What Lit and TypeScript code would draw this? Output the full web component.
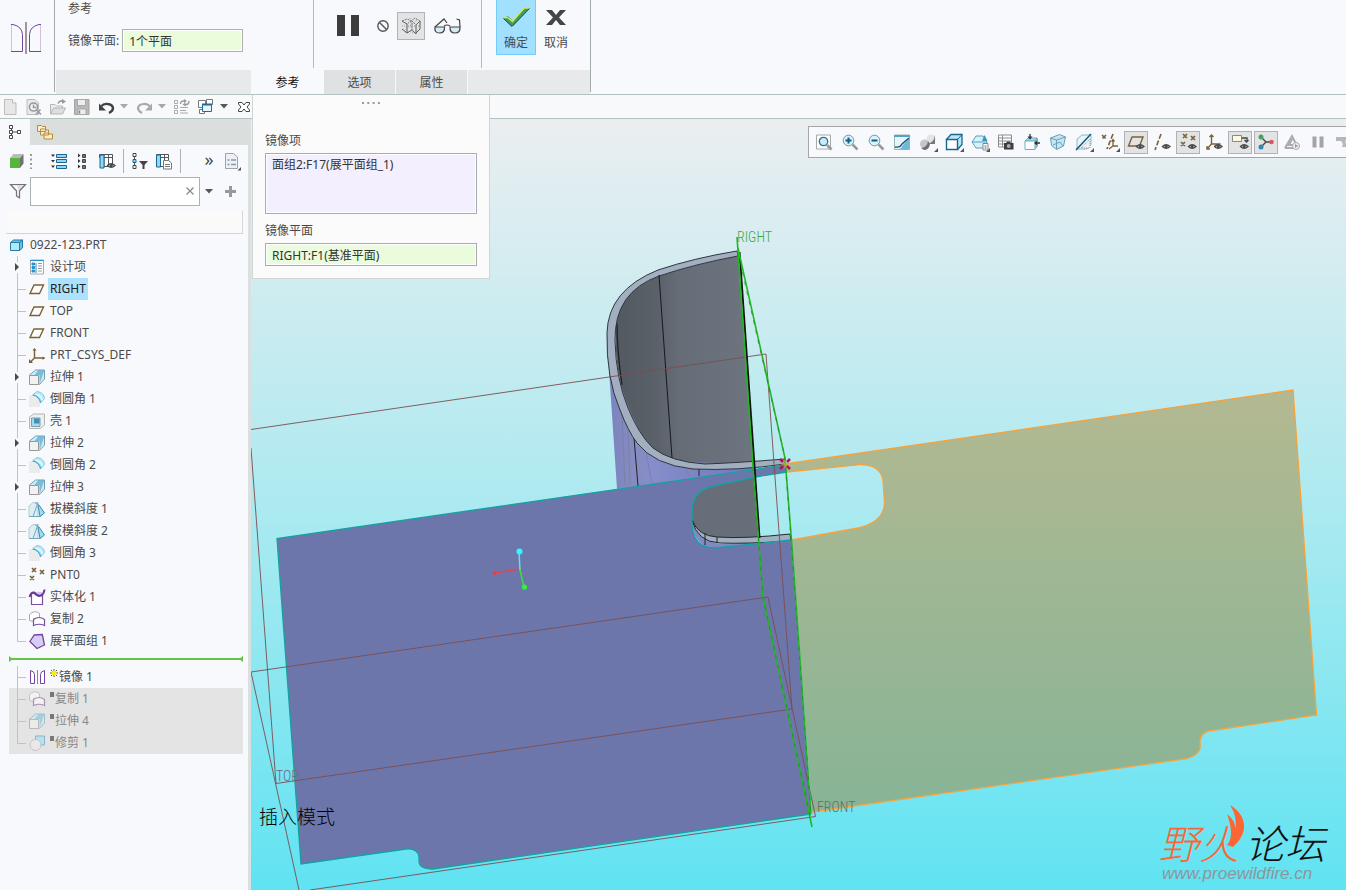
import { LitElement, html, svg, css, nothing, TemplateResult, SVGTemplateResult } from "lit";
import { customElement, state } from "lit/decorators.js";
import { classMap } from "lit/directives/class-map.js";

const eye = svg`<path d="M8.500 12.500q3.500-3.600 7.500 0q-4 3.600-7.500 0z" fill="#eef0f1" stroke="#484848" stroke-width="1.300"/><circle cx="12.200" cy="12.500" r="1.500" fill="#484848"/>`;
const corner = svg`<path d="M18 14v4h-4z" fill="#555"/>`;

const ICONS: Record<string, SVGTemplateResult> = {
  newDoc: svg`<path d="M2.500 .5h8l3.500 3.500v11.500h-11.500z" fill="#e7e7e7" stroke="#bdbdbd"/><path d="M10.500 .5v3.500h3.500" fill="#fff" stroke="#bdbdbd"/>`,
  findDoc: svg`<path d="M1 .5h8l3.500 3.500v11.500h-11.500z" fill="#e9e9e9" stroke="#bdbdbd"/><circle cx="7.500" cy="8" r="4" fill="#f4f4f4" stroke="#999" stroke-width="1.600"/><path d="M10.500 11l4.500 4.500M14.500 10.500l-4.500 5M7.500 5.500v3h2.500" fill="none" stroke="#999" stroke-width="1.500"/>`,
  open: svg`<path d="M.5 15v-9.500h4.500l1.500 1.500h6v3" fill="#eee" stroke="#b5b5b5"/><path d="M.5 15l3-6h12l-3 6z" fill="#dedede" stroke="#b5b5b5"/><path d="M8 4.500q1.500-3 4.500-2.500" fill="none" stroke="#999" stroke-width="1.600"/><path d="M12 0l4 2.500-4 2.500z" fill="#999"/>`,
  save: svg`<path d="M.5 .5h14.500v15h-14.500z" fill="#b8b8b8" stroke="#a4a4a4"/><path d="M3.500 .5h8v6h-8zM4 10h8v5.500h-8z" fill="#eee" stroke="#a9a9a9"/><path d="M5.500 11.500v3" stroke="#888" stroke-width="1.500"/>`,
  undo: svg`<path d="M3.500 7q2-2.500 6-2q5 .5 5.500 4q0 3-4 5" fill="none" stroke="#3e4346" stroke-width="2.400"/><path d="M1 4.500v7h7z" fill="#3e4346"/>`,
  redo: svg`<path d="M13.500 7q-2-2.500-6-2q-5 .5-5.500 4q0 3 4 5" fill="none" stroke="#a7a9aa" stroke-width="2.200"/><path d="M16 4.500v7h-7z" fill="#a7a9aa"/>`,
  regen: svg`<path d="M.5 1.500h3v3h-3zM.5 6.500h3v3h-3zM.5 11.500h3v3h-3z" fill="#fff" stroke="#aaa"/><path d="M6 8.500h8M6 11.500h6M6 14h8" stroke="#aaa"/><path d="M6.500 5q0-3.500 4-3M15 2q0 4-4 3.500" fill="none" stroke="#999" stroke-width="1.400"/><path d="M10 0l3 2-3 2zM11.500 3.500l-3 2 3 2z" fill="#999"/>`,
  windows: svg`<path d="M.5 1.500h7v7h-7zM8.500 .5h6v5h-6zM1.500 10.500h5v4h-5z" fill="#fff" stroke="#777"/><path d="M4.500 5.500h9v7h-9z" fill="#e6f6fd" stroke="#1f6d94"/><path d="M4 5.500h10" stroke="#1f6d94" stroke-width="2"/>`,
  closeOut: svg`<path d="M2.500 3.500h3.500l2 2.500 2-2.500h3.500v1.500l-2.500 3 2.500 3v1.500h-3.500l-2-2.500-2 2.500h-3.500v-1.500l2.500-3-2.500-3z" fill="#fff" stroke="#444"/>`,
  modelTree: svg`<path d="M4.500 3v10M6 8h5" stroke="#555" fill="none"/><path d="M2.500 1.500h3v3h-3zM2.500 6.500h3v3h-3zM2.500 11.500h3v3h-3zM10.500 6.500h3v3h-3z" fill="#fff" stroke="#444"/>`,
  layers: svg`<path d="M.5 1.500h4l1 1h3v5h-8zM3.500 5h4l1 1h3v5h-8zM7 9h4l1 1h3.500v5h-8.500z" fill="#fdeccb" stroke="#b98b3d"/>`,
  greenCube: svg`<path d="M1 5h10v10h-10z" fill="#58b53c"/><path d="M1 5l3.500-4h10l-3.500 4z" fill="#b9bbb9"/><path d="M11 5l3.500-4v9.500l-3.500 4.500z" fill="#6f7370"/>`,
  expand: svg`<path d="M0 1.500h4l-2 2.500zM0 7h4l-2 2.500zM0 12.500h4l-2 2.500z" fill="#333"/><path d="M5.500 1.500h10v3h-10zM5.500 6.500h10v3h-10zM5.500 12.500h10v3h-10z" fill="#8fd8f8" stroke="#1b668c"/>`,
  collapse: svg`<path d="M3 .5v4l2.500-2zM3 6v4l2.500-2zM3 11.500v4l2.500-2z" fill="#333"/><path d="M7.500 1.500h3v3h-3zM7.500 6.500h3v3h-3zM7.500 12.500h3v3h-3z" fill="#777" stroke="#444"/>`,
  columns: svg`<path d="M.5 1.500h13v3h-13zM5 4.500h4.500v9h-4.500zM9.500 4.500h4v9h-4zM5 1.500v3M9.500 1.500v3" fill="#fff" stroke="#555"/><path d="M1 2h4v13h-4z" fill="#8fd8f8" stroke="#1b668c"/>${eye}`,
  treeFilter: svg`<path d="M2.500 3v10" stroke="#555"/><path d="M1 .5h3v3h-3zM1 12.500h3v3h-3z" fill="#fff" stroke="#444"/><path d="M1 6.500h3v3h-3z" fill="#8fd8f8" stroke="#1b668c"/><path d="M7 8h9l-3.500 4v4h-2v-4z" fill="#444"/>`,
  columnDoc: svg`<path d="M.5 1.500h12v3h-12zM4.500 1.500v12h8v-9M8.500 1.500v12" fill="#fff" stroke="#555"/><path d="M.5 2h4v12h-4z" fill="#8fd8f8" stroke="#1b668c"/><path d="M7.500 7.500h5l3 2.500v6h-8z" fill="#fff" stroke="#777"/><path d="M9 11.500h5M9 13.500h5" stroke="#777"/>`,
  docList: svg`<path d="M.5 .5h8l4 3.500v11.500h-12z" fill="#edf1f5" stroke="#9da3a8"/><path d="M2.500 7h2M2.500 11.500h2M6 7h5M6 11.500h5" stroke="#8c97a3" stroke-width="1.600"/><path d="M16 14v3.500h-3.500z" fill="#555"/>`,
  funnel: svg`<path d="M.5 1.500h15l-6 6.500v7l-3-2v-5z" fill="#dedfe0" stroke="#707476" stroke-width="1.200"/><path d="M3 2.500h4l1.500 5v5h-1v-5z" fill="#fff"/>`,
  part: svg`<path d="M1.500 5.500h9v8h-9z" fill="#aeeafe" stroke="#2a7aa3"/><path d="M1.500 5.500l3-2.500h9l-3 2.500zM10.500 5.500l3-2.500v8l-3 2.500z" fill="#5fc4ee" stroke="#2a7aa3" stroke-linejoin="round"/>`,
  design: svg`<path d="M1.500 1h13v14h-13z" fill="#fff" stroke="#aaa"/><path d="M1 1.500h14M7 4v10" stroke="#2d8fc9" fill="none"/><path d="M3 4h2.500v2h-2.500zM3 7.500h2.500v2h-2.500zM3 11h2.500v2h-2.500z" fill="#2d8fc9" stroke="#2d8fc9"/><path d="M9 4.500h4M9 7h4M9 9.500h4M9 12h4" stroke="#999"/>`,
  plane: svg`<path d="M5 4h9.500l-4 8.500h-9.500z" fill="#fff" stroke="#7d6134" stroke-width="1.400"/>`,
  csys: svg`<path d="M5.500 2v9h10M5.500 11l-4 4" fill="none" stroke="#7d6134" stroke-width="1.400"/><path d="M3.500 3.500l2-2.500 2 2.500zM13.500 9.500l2.500 1.500-2.500 2zM0 12v4h4z" fill="#7d6134"/>`,
  extrude: svg`<path d="M.5 6l6-5h9v9l-5 5.500z" fill="#c8edfb" stroke="#789fb0"/><path d="M5.500 6l4-5h6l-5 5zM10.500 15v-9l5-5z" fill="#68afd0" opacity=".8"/><path d="M.5 6.500h9v9h-9z" fill="#f1f1f1" stroke="#999"/>`,
  round: svg`<path d="M0 4h5q6 1 6 7v5h-11z" fill="#ebebeb"/><path d="M4 3.500l4-3q7 1 7.500 7l-3.500 4q-1-6-8-8z" fill="#b8edff" stroke="#8cc4d8"/><path d="M3.500 4q7 1.500 8 8" fill="none" stroke="#3f9fc4"/><path d="M6.500 3q5.500 1 7 6" fill="none" stroke="#fff"/>`,
  shell: svg`<path d="M.5 4l4-3h11v11l-4 3.500h-11z" fill="#efefef" stroke="#b4b4b4"/><path d="M2.500 5h8.500v8.500h-8.500z" fill="#a9d9e8" stroke="#789fb0"/><path d="M5 5.500h5.500v5h-5.500z" fill="#3f91bb"/>`,
  draft: svg`<path d="M0 5l4-3.500h5v14h-9z" fill="#dceef4" stroke="#b7cbd2"/><path d="M10 4l5.500 8-4.500 3.500-2-11z" fill="#9bdbf3" stroke="#3d8bad"/><path d="M9 1.500l-5 14M0 15.500h11M6 2l4 2" fill="none" stroke="#6fa9c0"/>`,
  points: svg`<path d="M3 1l4 4m0-4l-4 4M11 3l4 4m0-4l-4 4M1 9l4 4m0-4l-4 4" stroke="#7d6134" stroke-width="1.700"/>`,
  solidify: svg`<path d="M2.500 5v10.500h11v-10q-3 1-4 0q-4-3-7-.5z" fill="#fff" stroke="#7a4ea0" stroke-width="1.200"/><path d="M6 3q6-1 8 1l-3 3q-3 0-5-4z" fill="#d3c4ea"/><path d="M.5 8q1.500-5 4.500-4.500q4 4.500 7 3q3-1.500 3.500-6" fill="none" stroke="#6a3a99" stroke-width="2"/>`,
  copy: svg`<path d="M.5 9.500v-6q5-5 10-1v5h-6v3z" fill="#fff" stroke="#aaa"/><path d="M4.500 14.500v-6q5.500-4 11 0v6q-5.500-2.500-11 0z" fill="#fff" stroke="#7a4ea0" stroke-width="1.200"/>`,
  flatten: svg`<path d="M.8 8.500l4.500-6.500 8-.5 2.200 10.500-7.500 3.500z" fill="#d7ccf3" stroke="#7445a0" stroke-width="1.300"/>`,
  mirror: svg`<path d="M8.500 1v14" stroke="#888"/><path d="M1.500 1.500v13h4v-9q0-3-4-4zM15.500 1.500v13h-4v-9q0-3 4-4z" fill="#fff" stroke="#7445a0"/>`,
  trim: svg`<path d="M6.500 1h9v9h-9z" fill="#9ddcf3" stroke="#3b91b5"/><circle cx="6.500" cy="10" r="5.500" fill="#eee" stroke="#aaa"/>`,
  fit: svg`<path d="M.5 1h14v14h-14z" fill="#fff" stroke="#a9a9a9"/><circle cx="7.500" cy="7.500" r="4.200" fill="#c8ecfa" stroke="#37708c" stroke-width="1.300"/><path d="M11 11l4.500 4.500" stroke="#999" stroke-width="2.600"/>`,
  zoomIn: svg`<circle cx="6.500" cy="6.500" r="5.300" fill="#d9f2fd" stroke="#6a97aa"/><path d="M6.500 3.500v6M3.500 6.500h6" stroke="#125d86" stroke-width="2"/><path d="M10.500 10.500l5 5" stroke="#999" stroke-width="2.500"/>`,
  zoomOut: svg`<circle cx="6.500" cy="6.500" r="5.300" fill="#d9f2fd" stroke="#6a97aa"/><path d="M3.500 6.500h6" stroke="#125d86" stroke-width="2"/><path d="M10.500 10.500l5 5" stroke="#999" stroke-width="2.500"/>`,
  repaint: svg`<path d="M.5 1h15v14.500h-15z" fill="#e6f5fa" stroke="#9fb5be"/><path d="M15.500 4v11.500h-11q3-1 4-4z" fill="#6fb9d6"/><path d="M0 2h16" stroke="#55a3c2" stroke-width="2"/><path d="M1 13q5 1 7-3l7-6" fill="none" stroke="#174f6c" stroke-width="1.300"/>`,
  shade: svg`<circle cx="11" cy="5" r="4.500" fill="#e4e4e4"/><path d="M15 1v9h-8q7-1 8-9z" fill="#777"/><circle cx="4.500" cy="10" r="4.500" fill="#c6c6c6"/><path d="M1 14q6 0 7-7l2 3q-1 6-6 6z" fill="#6f6f6f"/>${corner}`,
  displayCube: svg`<path d="M.5 5.500l4.500-5h11v10l-4.500 5z" fill="#bfe7f6" stroke="#1b668c" stroke-width="1.300"/><path d="M.5 5.500h11v10h-11z" fill="#fff" stroke="#1b668c" stroke-width="1.400"/><path d="M11.500 5.500l4.500-5" stroke="#1b668c"/>${corner}`,
  orient: svg`<path d="M4 2h7l4 6-4 6h-7l-4-6z" fill="#d4f1fb" stroke="#5b9fb9"/><path d="M0 8h15" stroke="#5b9fb9"/><path d="M10 7l2.500-6 3 6z" fill="#3e93b6"/><path d="M11 9.500h5v6.500h-5z" fill="#fff" stroke="#888"/><path d="M12.500 12h2M12.500 14h2" stroke="#666"/>${corner}`,
  viewMgr: svg`<path d="M.5 1h13v12h-13zM.5 4h13M.5 7h13M.5 10h13M4.500 1v12" fill="#fff" stroke="#8b8b8b"/><path d="M6 9h2l1-1.500h3l1 1.500h2.500v6.500h-9.500z" fill="#3e3e3e"/><circle cx="10.700" cy="12" r="2" fill="#aaa"/>`,
  direction: svg`<path d="M1 7l3-3h9l-2 3zM11 7l2.500-3v8l-2.500 3z" fill="#9edcf1" stroke="#71aec5"/><path d="M1 7h10v8.500h-10z" fill="#fff" stroke="#71aec5"/><path d="M6 0v5M16 9h-5" stroke="#333" stroke-width="1.300"/><path d="M3.500 2.500h5l-2.500 3zM13 6.500v5l-3-2.500z" fill="#333"/>`,
  perspective: svg`<path d="M.5 4l9-3.500 6 2.500-2 9-7 3.500-5-4z" fill="#c5e6f1" stroke="#6b9fb4"/><path d="M.5 4l6 2v9M6.500 6l9-3M3 11l7-3 3 4" fill="none" stroke="#6b9fb4"/>`,
  section: svg`<path d="M1 5l5-4h9v10l-4 4h-10z" fill="#e7f4f8" stroke="#89b9ca"/><path d="M14 5v9h-9z" fill="#eee" stroke="#999" stroke-dasharray="1 1"/><path d="M0 16l15-16" stroke="#145678" stroke-width="1.400"/>${corner}`,
  datums: svg`<path d="M0 1l4 4m0-4l-4 4M11 0l-6 15" stroke="#7d6134" stroke-width="1.600" stroke-dasharray="5 2"/><path d="M11 6v6h5M11 12l-4 3M9.500 7.500l1.500-2 1.500 2" fill="none" stroke="#7d6134" stroke-width="1.300"/>${corner}`,
  planeEye: svg`<path d="M4 3h11l-3.500 9h-11z" fill="none" stroke="#7d6134" stroke-width="1.400"/>${eye}`,
  axisEye: svg`<path d="M7 0l-6 16" stroke="#7d6134" stroke-width="1.600" stroke-dasharray="5 2"/>${eye}`,
  pointEye: svg`<path d="M3 0l4 4m0-4l-4 4M11 2l4 4m0-4l-4 4M1 8l4 4m0-4l-4 4" stroke="#7d6134" stroke-width="1.700"/>${eye}`,
  csysEye: svg`<path d="M5.500 1v9h9M5.500 10l-4.500 5M3.500 3l2-2 2 2M1 12v3h3" fill="none" stroke="#7d6134" stroke-width="1.400"/>${eye}`,
  noteEye: svg`<path d="M.5 1.500h9v6h-9z" fill="#fff8dd" stroke="#888"/><path d="M10 4h5v4M12.500 6l2 2 2-2" fill="none" stroke="#444" stroke-width="1.300"/>${eye}`,
  spin: svg`<path d="M3 3l5 5-5 5M8 8h6" fill="none" stroke="#444" stroke-width="1.400"/><circle cx="3" cy="3" r="2.500" fill="#4da05a"/><circle cx="3" cy="13" r="2.500" fill="#3286b5"/><circle cx="13.500" cy="8" r="2.300" fill="#d95757"/>`,
  simulate: svg`<path d="M1 14l7-12 6 12M1 14h9M8 5l-3 6h5" fill="none" stroke="#a9abac" stroke-width="2"/><circle cx="12" cy="12" r="3.500" fill="#eee" stroke="#aaa"/><path d="M11 10v4l3-2z" fill="#999"/>`,
  pauseSmall: svg`<path d="M2.500 2.500h4v11h-4zM9.500 2.500h4v11h-4z" fill="#a2a4a5"/>`,
  stepBack: svg`<path d="M0 3h12q-5 5 0 10h-6q2-3-1-6h-5z" fill="#b5b7b8"/>`,
};

const icon = (name: string, size = 16): TemplateResult =>
  html`<svg class="icon" width=${size} height=${size} viewBox="0 0 16 16" aria-hidden="true">${ICONS[name]}</svg>`;

interface Feature {
  label: string;
  icon: string;
  expandable?: boolean;
  selected?: boolean;
}

const FEATURES: Feature[] = [
  { label: "设计项", icon: "design", expandable: true },
  { label: "RIGHT", icon: "plane", selected: true },
  { label: "TOP", icon: "plane" },
  { label: "FRONT", icon: "plane" },
  { label: "PRT_CSYS_DEF", icon: "csys" },
  { label: "拉伸 1", icon: "extrude", expandable: true },
  { label: "倒圆角 1", icon: "round" },
  { label: "壳 1", icon: "shell" },
  { label: "拉伸 2", icon: "extrude", expandable: true },
  { label: "倒圆角 2", icon: "round" },
  { label: "拉伸 3", icon: "extrude", expandable: true },
  { label: "拔模斜度 1", icon: "draft" },
  { label: "拔模斜度 2", icon: "draft" },
  { label: "倒圆角 3", icon: "round" },
  { label: "PNT0", icon: "points" },
  { label: "实体化 1", icon: "solidify" },
  { label: "复制 2", icon: "copy" },
  { label: "展平面组 1", icon: "flatten" },
];

const SUPPRESSED: Feature[] = [
  { label: "复制 1", icon: "copy" },
  { label: "拉伸 4", icon: "extrude" },
  { label: "修剪 1", icon: "trim" },
];

const VIEW_TOOLS: Array<{ icon: string; title: string; on?: boolean }> = [
  { icon: "fit", title: "重新调整" },
  { icon: "zoomIn", title: "放大" },
  { icon: "zoomOut", title: "缩小" },
  { icon: "repaint", title: "重画" },
  { icon: "shade", title: "渲染选项" },
  { icon: "displayCube", title: "显示样式" },
  { icon: "orient", title: "已保存方向" },
  { icon: "viewMgr", title: "视图管理器" },
  { icon: "direction", title: "视图法向" },
  { icon: "perspective", title: "透视图" },
  { icon: "section", title: "截面" },
  { icon: "datums", title: "基准显示过滤器" },
  { icon: "planeEye", title: "平面显示", on: true },
  { icon: "axisEye", title: "轴显示" },
  { icon: "pointEye", title: "点显示", on: true },
  { icon: "csysEye", title: "坐标系显示" },
  { icon: "noteEye", title: "注释显示", on: true },
  { icon: "spin", title: "旋转中心", on: true },
  { icon: "simulate", title: "仿真" },
  { icon: "pauseSmall", title: "暂停" },
  { icon: "stepBack", title: "返回" },
];

const reset = css`
  * { box-sizing: border-box; }
  button { font: inherit; color: inherit; background: none; border: 0; padding: 0; margin: 0; display: inline-flex; align-items: center; justify-content: center; }
  input, textarea { font: inherit; color: inherit; margin: 0; border-radius: 0; outline: none; }
  svg { display: block; flex: none; overflow: visible; }
`;

@customElement("feature-dashboard")
export class FeatureDashboard extends LitElement {
  @state() private tab = "参考";

  static styles = [reset, css`
    :host { display: flex; height: 95px; background: #f7f9fc; border-bottom: 1px solid #b4c1c1; }
    .kind { width: 55px; padding: 22px 0 0 11px; border-right: 1px solid #a3adad; margin-bottom: 2px; }
    .board { width: 536px; display: flex; flex-direction: column; border-right: 1px solid #a3adad; margin-bottom: 2px; }
    .top { display: flex; height: 68px; flex: none; }
    .fields { width: 259px; padding-left: 13px; border-right: 1px solid #b2baba; }
    .title { height: 18px; line-height: 18px; }
    .field { display: flex; align-items: center; gap: 3px; margin-top: 11px; }
    .field input { width: 121px; height: 23px; padding: 0 6px; border: 1px solid #adb0ad; background: #eafcdc; box-shadow: inset 0 0 0 1px #fff; color: #333; }
    .controls { width: 168px; display: flex; align-items: flex-start; padding: 12px 0 0 22px; border-right: 1px solid #b2baba; }
    .controls button { height: 28px; }
    .pause { width: 24px; }
    .none { width: 16px; margin: 0 6px 0 15px; }
    .preview { width: 28px; border: 1px solid #b0b2b3; background: #e1e3e4; }
    .glasses { width: 28px; margin-left: 8px; }
    .finish { display: flex; padding-left: 14px; }
    .finish button { width: 40px; height: 55px; flex-direction: column; justify-content: flex-start; border: 1px solid transparent; border-top: 0; padding-top: 7px; gap: 7px; line-height: 18px; }
    .finish .ok { background: #a2e0ff; border-color: #72cdfa; }
    .tabs { display: flex; height: 24px; margin-top: 2px; padding-left: 1px; gap: 1px; flex: none; }
    .blank { background: #e8e9eb; width: 195px; }
    .rest { background: #e8e9eb; flex: 1; }
    .tabs button { width: 71px; background: #e0e1e3; padding-top: 2px; }
    .tabs .active { background: #f7f9fc; color: #111; }
  `];

  render() {
    return html`
      <div class="kind">
        <svg width="30" height="32" viewBox="0 0 30 32" aria-hidden="true">
          <path d="M.5 2v28M29.500 2v28" stroke="#cfc0e3"/>
          <path d="M0 2.500h2q9 2 9.500 10v17h-11.500M30 2.500h-2q-9 2-9.500 10v17h11.500" fill="none" stroke="#7445a0"/>
          <path d="M15 0v32" stroke="#999" stroke-width="2"/>
        </svg>
      </div>
      <div class="board">
        <div class="top">
          <div class="fields">
            <div class="title">参考</div>
            <div class="field"><label for="plane">镜像平面:</label><input id="plane" .value=${"1个平面"}></div>
          </div>
          <div class="controls">
            <button class="pause" title="暂停"><svg width="24" height="24" viewBox="0 0 24 24"><path d="M1 1h8v21h-8zM15 1h8v21h-8z" fill="#3c3c3c"/></svg></button>
            <button class="none" title="无预览"><svg width="12" height="12" viewBox="0 0 12 12"><circle cx="6" cy="6" r="5.200" fill="none" stroke="#555" stroke-width="1.400"/><path d="M2.500 2.500l7 7" stroke="#555" stroke-width="1.400"/></svg></button>
            <button class="preview" title="附件预览"><svg width="20" height="18" viewBox="0 0 20 18"><path d="M1 4l5 3v9l-5-4M6 16l5-3 4 4v-9l4-4v8l-4 4" fill="none" stroke="#5c5c5c"/><path d="M1 4l5-2 4 2-4 3M10 4l4-3 5 3-4 4-4-4v9" fill="none" stroke="#777" stroke-dasharray="2 1"/><path d="M1 9h18M9 1l3 16M3 14l14-12" fill="none" stroke="#999" stroke-dasharray="1 1"/></svg></button>
            <button class="glasses" title="预览"><svg width="27" height="16" viewBox="0 0 27 16"><path d="M1 9q-1 6 4.500 6t5-6zM16 9q-.5 6 5 6t5-6z" fill="#dbe9f2" stroke="#444" stroke-width="1.200"/><path d="M1 9l9-8 3 4M10 8q3-2 6 0M26 9l-.500-7-3-1" fill="none" stroke="#444" stroke-width="1.200"/></svg></button>
          </div>
          <div class="finish">
            <button class="ok"><svg width="28" height="20" viewBox="0 0 28 20"><path d="M1 11l5-2 5 5 12-13h5l-17 18h-2z" fill="#3b9c6d"/><path d="M1 10.500h4.500l5 4 11.500-13.500h5.500" fill="none" stroke="#e2e53e" stroke-width="1.300"/><path d="M1.500 11.500l8.500 8 17.500-18" fill="none" stroke="#26513f"/></svg>确定</button>
            <button><svg width="20" height="20" viewBox="0 0 20 20"><path d="M0 3h6l4 5 4-5h6l-7 7.500 7 7.500h-6l-4-5-4 5h-6l7-7.500z" fill="#454545"/></svg>取消</button>
          </div>
        </div>
        <nav class="tabs">
          <span class="blank"></span>
          ${["参考", "选项", "属性"].map((t) => html`<button class=${classMap({ active: t === this.tab })} @click=${() => (this.tab = t)}>${t}</button>`)}
          <span class="rest"></span>
        </nav>
      </div>`;
  }
}

@customElement("quick-toolbar")
export class QuickToolbar extends LitElement {
  static styles = [reset, css`
    :host { display: flex; align-items: center; gap: 8px; height: 24px; padding-left: 2px; background: #f7f9fb; border-bottom: 1px solid #b4c1c1; }
    .split { display: flex; align-items: center; gap: 6px; }
  `];
  private arrow(color: string) {
    return html`<button title="更多"><svg width="8" height="5" viewBox="0 0 8 5"><path d="M0 0h8l-4 4.500z" fill=${color}/></svg></button>`;
  }
  render() {
    return html`
      <button title="新建">${icon("newDoc")}</button>
      <button title="查找">${icon("findDoc")}</button>
      <button title="打开">${icon("open")}</button>
      <button title="保存">${icon("save")}</button>
      <span class="split"><button title="撤销">${icon("undo")}</button>${this.arrow("#a5a7a8")}</span>
      <span class="split"><button title="重做">${icon("redo")}</button>${this.arrow("#a5a7a8")}</span>
      <button title="重新生成">${icon("regen")}</button>
      <span class="split"><button title="窗口">${icon("windows")}</button>${this.arrow("#555")}</span>
      <button title="关闭">${icon("closeOut")}</button>`;
  }
}

@customElement("model-tree")
export class ModelTree extends LitElement {
  static styles = [reset, css`
    :host { display: block; width: 251px; flex: none; background: #f7f9fc; border-right: 3px solid #dadfe0; }
    .tabs { display: flex; height: 26px; background: #dadfde; }
    .tabs button { width: 30px; }
    .tabs .active { background: #f7f9fc; }
    .tools { display: flex; align-items: center; height: 31px; padding-left: 9px; }
    .dots { width: 2px; margin: 0 19px 0 5px; }
    .tools .gap { margin-left: 8px; }
    .sep { width: 1px; height: 24px; background: #adb2b4; margin: 0 8px; }
    .more { width: 12px; margin: 0 10px 0 14px; font-size: 18px; line-height: 18px; padding-bottom: 3px; }
    .search { display: flex; align-items: center; height: 30px; padding-left: 10px; }
    .box { display: flex; align-items: center; width: 170px; height: 29px; margin: 0 5px 0 4px; border: 1px solid #a8b4b8; background: #fff; }
    .box input { flex: 1; min-width: 0; border: 0; height: 24px; background: none; }
    .box button { width: 18px; }
    .add { margin-left: 12px; }
    .strip { height: 23px; margin: 5px 5px 0 6px; background: #fafafb; border: solid #d4d6d6; border-width: 0 1px 1px 0; }
    ul { list-style: none; margin: 0; padding: 0; }
    li { display: flex; align-items: center; height: 22px; padding-left: 9px; }
    li.root { gap: 5px; }
    .name { height: 22px; line-height: 21px; padding: 0 2px; margin-left: 3px; white-space: nowrap; }
    .selected .name { background: #ade2fe; color: #222; }
    .insert { display: block; width: 234px; height: 14px; margin-left: 9px; }
    .off { width: 234px; margin-left: 9px; background: #e4e4e4; color: #888; }
    .off li { padding-left: 0; }
    .off .icon { opacity: .55; }
    .mark { margin: 0 0 9px 5px; }
    .mark + .name { margin-left: 0; padding-left: 1px; }
  `];

  private branch(last: boolean, expandable = false) {
    return html`<svg width="20" height="22" viewBox="0 0 20 22" aria-hidden="true">
      ${expandable
        ? svg`<path d="M8.500 0v6M8.500 17v5" stroke="#bfc3c6"/><path d="M6 7v8l4-4z" fill="#4a4a4a"/>`
        : last
          ? svg`<path d="M8.500 0v11.500h8.500" fill="none" stroke="#bfc3c6"/>`
          : svg`<path d="M8.500 0v22M8.500 11.500h8.500" fill="none" stroke="#bfc3c6"/>`}
    </svg>`;
  }

  render() {
    return html`
      <div class="tabs"><button class="active" title="模型树">${icon("modelTree")}</button><button title="文件夹">${icon("layers")}</button></div>
      <div class="tools">
        <button title="模型">${icon("greenCube")}</button>
        <svg class="dots" width="2" height="16" viewBox="0 0 2 16"><path d="M1 1v15" stroke="#999" stroke-width="2" stroke-dasharray="2 2.500"/></svg>
        <button title="全部展开">${icon("expand")}</button>
        <button class="gap" title="全部折叠">${icon("collapse")}</button>
        <button class="gap" title="树列">${icon("columns")}</button>
        <span class="sep"></span>
        <button title="树过滤器">${icon("treeFilter")}</button>
        <button class="gap" title="列设置">${icon("columnDoc")}</button>
        <span class="sep"></span>
        <button class="more" title="更多">»</button>
        <button title="设置">${icon("docList")}</button>
      </div>
      <div class="search">
        ${icon("funnel")}
        <div class="box"><input aria-label="搜索模型树"><button title="清除"><svg width="8" height="8" viewBox="0 0 8 8"><path d="M.5 .5l7 7m0-7l-7 7" stroke="#888" stroke-width="1.200"/></svg></button></div>
        <button title="搜索选项"><svg width="8" height="5" viewBox="0 0 8 5"><path d="M0 0h8l-4 4.500z" fill="#555"/></svg></button>
        <button class="add" title="添加"><svg width="11" height="11" viewBox="0 0 11 11"><path d="M5.500 0v11M0 5.500h11" stroke="#999" stroke-width="3"/></svg></button>
      </div>
      <div class="strip"></div>
      <ul>
        <li class="root">${icon("part")}<span>0922-123.PRT</span></li>
        ${FEATURES.map((f, i) => html`<li class=${classMap({ selected: !!f.selected })}>${this.branch(i === FEATURES.length - 1, f.expandable)}${icon(f.icon)}<span class="name">${f.label}</span></li>`)}
      </ul>
      <svg class="insert" viewBox="0 0 234 14" aria-hidden="true"><path d="M0 7h234" stroke="#63c446" stroke-width="2"/><path d="M0 4l4 3-4 3zM234 4l-4 3 4 3z" fill="#63c446"/></svg>
      <ul>
        <li>${this.branch(false)}${icon("mirror")}<svg class="mark" width="8" height="8" viewBox="0 0 8 8"><path d="M4 0v8M0 4h8M1 1l6 6M7 1l-6 6" stroke="#555"/><circle cx="4" cy="4" r="2.500" fill="#ffef00"/></svg><span class="name">镜像 1</span></li>
      </ul>
      <ul class="off">
        ${SUPPRESSED.map((f, i) => html`<li>${this.branch(i === SUPPRESSED.length - 1)}${icon(f.icon)}<svg class="mark" width="4" height="5" viewBox="0 0 4 5"><path d="M0 0h4v5h-4z" fill="#777"/></svg><span class="name">${f.label}</span></li>`)}
      </ul>`;
  }
}

@customElement("reference-panel")
export class ReferencePanel extends LitElement {
  static styles = [reset, css`
    :host { display: flex; flex-direction: column; width: 238px; padding: 6px 12px 12px; background: #fbfbfb; border: 1px solid #cfd6d6; border-top: 0; }
    .grip { align-self: center; }
    label { line-height: 18px; margin-top: 27px; }
    textarea, input { display: block; width: 100%; margin-top: 3px; padding: 0 6px; border: 1px solid #a9acae; box-shadow: inset 0 0 0 1px #fff; color: #333; }
    textarea { height: 61px; padding-top: 2px; line-height: 18px; background: #f4effe; resize: none; overflow: hidden; }
    input { height: 23px; background: #eafcdc; }
    textarea + label { margin-top: 8px; }
  `];
  render() {
    return html`
      <svg class="grip" width="18" height="4" viewBox="0 0 18 4"><path d="M0 2h18" stroke="#999" stroke-width="2" stroke-dasharray="2 3.300"/></svg>
      <label for="item">镜像项</label>
      <textarea id="item" .value=${"面组2:F17(展平面组_1)"}></textarea>
      <label for="datum">镜像平面</label>
      <input id="datum" .value=${"RIGHT:F1(基准平面)"}>`;
  }
}

@customElement("graphics-view")
export class GraphicsView extends LitElement {
  static styles = [reset, css`
    :host { display: block; position: relative; flex: 1; min-width: 0; overflow: hidden; }
    .scene { width: 100%; height: 100%; }
    .tag { font-family: "Roboto Condensed", "Open Sans", sans-serif; font-size: 14px; font-weight: 300; }
    .bar { position: absolute; left: 557px; right: 0; top: 7px; height: 32px; display: flex; align-items: center; gap: 2px; padding-left: 3px; background: #f7f9fc; border: 1px solid #a3a5a6; border-right: 0; overflow: hidden; }
    .bar button { width: 24px; height: 23px; flex: none; border: 1px solid transparent; }
    .bar .on { background: #e1e3e4; border-color: #b0b2b3; }
    .mode { position: absolute; left: 8px; bottom: 59px; font-size: 19px; line-height: 28px; font-weight: 300; color: #000; }
    .brand { position: absolute; right: 21px; bottom: 8px; color: #111; }
    .word { font-size: 40px; line-height: 44px; font-weight: 300; font-style: italic; display: flex; }
    .fire { color: #fb6734; margin-right: 6px; }
    .flame { position: absolute; left: 67px; top: -18px; }
    .url { color: #8b979b; font: italic 17px/16px "Liberation Sans", sans-serif; padding-left: 3px; }
  `];

  render() {
    return html`
      <svg class="scene" viewBox="251 119 1095 771" preserveAspectRatio="xMinYMin slice" role="img" aria-label="镜像预览">
        <defs>
          <linearGradient id="sky" x1="0" y1="0" x2="0" y2="1"><stop offset="0" stop-color="#ebeef0"/><stop offset=".13" stop-color="#dbedf0"/><stop offset=".57" stop-color="#a3e9f0"/><stop offset="1" stop-color="#60e3f2"/></linearGradient>
          <linearGradient id="copy" x1="0" y1="0" x2="0" y2="1"><stop offset="0" stop-color="#b3b991"/><stop offset="1" stop-color="#87b496"/></linearGradient>
          <linearGradient id="inner" x1="0" y1="0" x2="1" y2="0"><stop offset="0" stop-color="#535961"/><stop offset=".3" stop-color="#5a6169"/><stop offset=".45" stop-color="#656c76"/><stop offset="1" stop-color="#6d7580"/></linearGradient>
          <linearGradient id="side" x1="0" y1="0" x2="1" y2="0"><stop offset="0" stop-color="#7b84c1"/><stop offset=".15" stop-color="#858bbe"/><stop offset=".3" stop-color="#868dca"/><stop offset="1" stop-color="#7179bd"/></linearGradient>
        </defs>
        <path d="M251 119h1095v771h-1095z" fill="url(#sky)"/>
        <path d="M609 370L617 489L755 472V460L640 400z" fill="url(#side)"/>
        <path d="M622 415l3 70M628 430l2 55M646 453l6 30M686 468l3 8M716 469v5" stroke="#767ba0" opacity=".6"/>
        <path d="M634 438L638 486M699 469v7" stroke="#222" fill="none"/>
        <path d="M738 256Q695 264 659 276Q618 292 616 325C614 365 620 395 643 437Q655 453 672 459Q700 465 754 462z" fill="url(#inner)"/>
        <path d="M617 324Q617 350 622 385" fill="none" stroke="#222" stroke-width="1.300"/>
        <path d="M737 251Q694 258 658 270Q608 290 607 333Q606 378 620 410Q628 431 637 443Q654 465 693 469Q738 471 785 464V459Q735 463 705 464Q671 462 653 448Q639 435 628 408Q616 379 615 341Q614 292 659 276Q695 264 738 256z" fill="#a2afc1" stroke="#30353b"/>
        <path d="M659 275L672 458" stroke="#16191c"/>
        <path d="M755 477L713 486Q692 491 692 511V522Q697 534 717 538H760z" fill="#676e79"/>
        <path d="M692 520Q696 539 720 544L791 541L790 549H710Q691 540 692 520z" fill="#8189c5"/>
        <path d="M692 520Q698 536 717 537Q745 539 790 534L791 541Q745 544 720 543Q697 542 692 520z" fill="#a2afc1" stroke="#25292d"/>
        <path d="M705 533v12M717 537v6" stroke="#222"/>
        <path d="M277 538.500L785 465L787 472L755 477L713 486Q692 491 692 511V522Q692 548 715 548L791 540L811 814L433 869Q419 869 419 861V857Q418 848 406 849L301 864z" fill="#6d76aa"/>
        <path d="M785 465L277 538.500L301 864L406 849Q418 848 419 857V861Q419 869 433 869L811 814M787 472L755 477L713 486Q692 491 692 511V522Q692 548 715 548L791 540" fill="none" stroke="#13a2a1" stroke-width="1.300"/>
        <path d="M785 464L1293 390L1316.500 715L1212 730.500Q1202 731 1200 740V744Q1202 754 1187 758.500L812 812L791.500 540L858 528Q884 522 884.500 503L883 480Q880 464 859 464.700L787 472z" fill="url(#copy)"/>
        <path d="M785 464L1293 390L1316.500 715L1212 730.500Q1202 731 1200 740V744Q1202 754 1187 758.500L812 812M791.500 540L858 528Q884 522 884.500 503L883 480Q880 464 859 464.700L787 472" fill="none" stroke="#f8a23a" stroke-width="1.300"/>
        <path d="M251 429.500L766 354L792 709L276 783.500L251 448M251 672L768 597L815.500 816.500L310 890M251 672L299 890" fill="none" stroke="#7c4d50" stroke-width=".9"/>
        <path d="M739.500 252L759.500 538" stroke="#111" stroke-width="2"/>
        <path d="M737 237L753 467L763 597L812 827M738 248L785 458L791.500 540L811 814" fill="none" stroke="#22b822" stroke-width="1.600"/>
        <path d="M753 467L763 597L811 820M740 262L785 458L811 814" fill="none" stroke="#2a6e45" stroke-width=".6" stroke-dasharray="4 6"/>
        <path d="M780 459l3 3M787 466l3 3M790 459l-3 3M783 466l-3 3" stroke="#b4144f" stroke-width="2.500"/><path d="M781 464h8M785 460v8" stroke="#f19a26"/>
        <path d="M494 573L520 569" stroke="#ee3f50" stroke-width="1.500"/><path d="M519 552L520 570" stroke="#55e5ee" stroke-width="1.500"/><path d="M520 570L524 587" stroke="#3bdc42" stroke-width="1.500"/>
        <circle cx="495" cy="573" r="2" fill="#f13a40"/><circle cx="519.500" cy="551.500" r="3" fill="#2dfafa"/><circle cx="524.500" cy="587" r="2.600" fill="#35f23b"/>
        <text class="tag" x="737" y="242" fill="#3caa3e">RIGHT</text>
        <text class="tag" x="276" y="781" fill="#6f6878">TOP</text>
        <text class="tag" x="817" y="812" fill="#6c6a62">FRONT</text>
      </svg>
      <div class="bar" role="toolbar">
        ${VIEW_TOOLS.map((t) => html`<button title=${t.title} class=${t.on ? "on" : nothing}>${icon(t.icon)}</button>`)}
      </div>
      <div class="mode">插入模式</div>
      <div class="brand">
        <div class="word"><span class="fire">野火</span><span>论坛</span></div>
        <svg class="flame" width="20" height="46" viewBox="0 0 20 46" aria-hidden="true"><path d="M4 1Q19 10 18 25Q16 35 7 43L1 41Q9 32 1 10Q10 17 9 26Q12 13 4 1z" fill="#fb6734"/></svg>
        <div class="url">www.proewildfire.cn</div>
      </div>`;
  }
}

@customElement("app-root")
export class AppRoot extends LitElement {
  static styles = [reset, css`
    :host { display: flex; flex-direction: column; height: 100vh; overflow: hidden; background: #f7f9fc; color: #4a4a4a; font: 12px/18px "Noto Sans", "Noto Sans CJK SC", sans-serif; }
    .work { position: relative; flex: 1; min-height: 0; display: flex; flex-direction: column; }
    .body { flex: 1; min-height: 0; display: flex; }
    reference-panel { position: absolute; left: 252px; top: 0; }
  `];
  render() {
    return html`
      <feature-dashboard></feature-dashboard>
      <div class="work">
        <quick-toolbar></quick-toolbar>
        <div class="body"><model-tree></model-tree><graphics-view></graphics-view></div>
        <reference-panel></reference-panel>
      </div>`;
  }
}
